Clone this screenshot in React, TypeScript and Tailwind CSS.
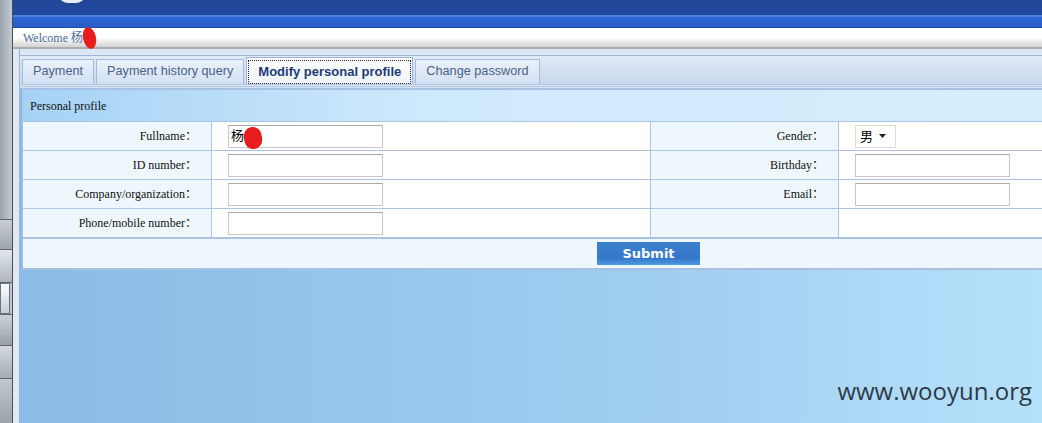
import React from 'react'

const serif = { fontFamily: '"Liberation Serif", "Noto Sans CJK SC", serif' }

const TABS = ['Payment', 'Payment history query', 'Modify personal profile', 'Change password']

function Label({ text }: { text: string }) {
  return (
    <div className="flex h-[29px] items-center justify-end border-b border-[#adc5e2] bg-[#eef7fe] pr-[14px] text-[12px] text-[#111]">
      {text}：
    </div>
  )
}

function Field({ children }: { children?: React.ReactNode }) {
  return (
    <div className="flex h-[29px] items-center border-b border-l border-[#adc5e2] bg-white pl-[16px]">
      {children}
    </div>
  )
}

function TextBox({ value }: { value?: string }) {
  return (
    <div className="flex h-[23px] w-[155px] items-center border border-[#c8c8c8] border-t-[#a9a9a9] bg-white pl-[2px] text-[13px] text-black">
      {value}
    </div>
  )
}

function Sidebar() {
  return (
    <div className="flex w-[13px] shrink-0 flex-col border-r border-[#47505a] bg-linear-to-r from-[#9aa3ad] to-[#c4cad1]">
      <div className="h-[219px] shrink-0" />
      <div className="h-[31px] shrink-0 border-y border-[#5d6670] bg-linear-to-b from-[#c9ced4] to-[#9ea6ae]" />
      <div className="h-[33px] shrink-0 border-b border-[#5d6670] bg-linear-to-b from-[#e4e7ea] to-[#aeb5bc] pr-[3px]" />
      <div className="flex h-[32px] shrink-0 border-b border-[#5d6670] pr-[2px]">
        <div className="flex-1 border border-[#6b737c] bg-linear-to-b from-white to-[#c6ccd2]" />
      </div>
      <div className="h-[31px] shrink-0 border-b border-[#5d6670] bg-linear-to-b from-[#cdd2d7] to-[#98a0a8]" />
      <div className="h-[33px] shrink-0 border-b border-[#5d6670] bg-linear-to-b from-[#d5d9dd] to-[#a3abb3]" />
      <div className="flex-1 bg-linear-to-b from-[#c2c8ce] to-[#9aa2aa]" />
    </div>
  )
}

export default function App() {
  return (
    <div className="relative flex h-[423px] w-[1042px] overflow-hidden bg-[#8ebfe8]">
      <Sidebar />
      <div className="flex min-w-0 flex-1 flex-col">
        {/* header */}
        <div className="relative h-[15px] shrink-0 bg-[#22479a]">
          <div className="absolute left-[46px] top-[-14px] h-[17px] w-[26px] rounded-full border-b-[3px] border-white/90" />
        </div>
        <div className="h-[2px] shrink-0 bg-[#4f82dc]" />
        <div className="h-[11px] shrink-0 border-b border-[#2050b0] bg-linear-to-b from-[#2d63d4] to-[#2a5cc6]" />
        <div
          className="flex h-[19px] shrink-0 items-center bg-linear-to-b from-white via-white via-50% to-[#d3d3d3] pl-[10px] pt-[1px] text-[12px] text-[#4a6c9c]"
          style={serif}
        >
          Welcome 杨
        </div>
        <div className="h-[2px] shrink-0 bg-[#a9acb0]" />

        {/* body */}
        <div className="flex min-h-0 flex-1 bg-[#e1e8f2] pl-[6px]">
          <div className="flex min-w-0 flex-1 flex-col border-l border-[#9fb3d6] bg-linear-to-r from-[#8bbce6] via-[#9fcdf0] via-60% to-[#b6e1fb]">
            <div className="h-[6px] shrink-0 bg-[#dce7f6]" />
            <div
              className="flex h-[29px] shrink-0 items-end gap-[2px] border-t border-[#a3b3db] bg-linear-to-b from-[#e0e9f6] to-[#c8d8ee] pl-[2px]"
              style={{ fontFamily: '"Liberation Sans", sans-serif' }}
            >
              {TABS.map((t, i) =>
                i === 2 ? (
                  <div
                    key={t}
                    className="mb-[-1px] flex h-[28px] items-center border border-[#9fb4d8] border-b-0 bg-linear-to-b from-white to-[#eef3fa] px-[1px] pt-[1px]"
                  >
                    <div className="flex h-[24px] items-center border border-dotted border-[#222] px-[9px] text-[13px] font-bold text-[#1d3b74]">
                      {t}
                    </div>
                  </div>
                ) : (
                  <div
                    key={t}
                    className="flex h-[25px] items-center border border-[#a6bade] border-b-0 bg-linear-to-b from-[#eaf1fb] to-[#d3e0f2] px-[10px] text-[12.7px] text-[#4b6189]"
                  >
                    {t}
                  </div>
                )
              )}
            </div>
            <div className="h-[1px] shrink-0 bg-[#b7c7e2]" />
            <div className="h-[1px] shrink-0 bg-[#dbe6f4]" />
            <div className="h-[1px] shrink-0 bg-[#b5c9e6]" />
            <div className="h-[1px] shrink-0 bg-[#d4e3f3]" />

            {/* panel */}
            <div
              className="ml-[2px] shrink-0 border-l border-t-[2px] border-b-[2px] border-[#a8c1e3] bg-[#eef7fe]"
              style={serif}
            >
              <div className="flex h-[32px] items-center border-b border-[#a9c4e4] bg-linear-to-r from-[#a5d2f5] via-[#cfe9fc] via-40% to-[#d7eefd] pl-[7px] text-[12px] text-[#111]">
                Personal profile
              </div>
              <div className="grid grid-cols-[188px_439px_188px_1fr]">
                <Label text="Fullname" />
                <Field>
                  <TextBox value="杨" />
                </Field>
                <div className="border-l border-[#adc5e2]">
                  <Label text="Gender" />
                </div>
                <Field>
                  <div
                    className="flex h-[23px] w-[41px] items-center gap-[6px] border border-[#dcdcdc] bg-white pl-[4px] text-[13px] text-black"
                    style={{ fontFamily: '"Noto Sans CJK SC", sans-serif' }}
                  >
                    男
                    <svg width="7" height="4" viewBox="0 0 7 4">
                      <path d="M0 0h7L3.5 4z" fill="#222" />
                    </svg>
                  </div>
                </Field>

                <Label text="ID number" />
                <Field>
                  <TextBox />
                </Field>
                <div className="border-l border-[#adc5e2]">
                  <Label text="Birthday" />
                </div>
                <Field>
                  <TextBox />
                </Field>

                <Label text="Company/organization" />
                <Field>
                  <TextBox />
                </Field>
                <div className="border-l border-[#adc5e2]">
                  <Label text="Email" />
                </div>
                <Field>
                  <TextBox />
                </Field>

                <Label text="Phone/mobile number" />
                <Field>
                  <TextBox />
                </Field>
                <div className="border-l border-[#adc5e2]">
                  <div className="h-[29px] border-b border-[#adc5e2] bg-[#eef7fe]" />
                </div>
                <Field />
              </div>
              <div className="flex h-[30px] items-center border-t border-[#a8c1e3] pl-[574px]">
                <div
                  className="flex h-[23px] w-[103px] items-center justify-center bg-linear-to-b from-[#3d80d0] via-[#3577c9] via-70% to-[#4d9be0] text-[13px] font-bold text-white"
                  style={{ fontFamily: '"DejaVu Sans", sans-serif' }}
                >
                  Submit
                </div>
              </div>
            </div>

            <div className="relative flex-1">
              <div
                className="absolute bottom-[14px] right-[10px] text-[24px] text-[#2c3a48]"
                style={{ fontFamily: '"Open Sans", sans-serif' }}
              >
                www.wooyun.org
              </div>
            </div>
          </div>
        </div>
      </div>

      {/* redaction marks */}
      <div className="absolute left-[83px] top-[27px] h-[22px] w-[13px] rotate-[-12deg] rounded-[50%] bg-[#e81c1c]" />
      <div className="absolute left-[244px] top-[127px] h-[22px] w-[18px] rotate-[-8deg] rounded-[45%] bg-[#e81c1c]" />
    </div>
  )
}
